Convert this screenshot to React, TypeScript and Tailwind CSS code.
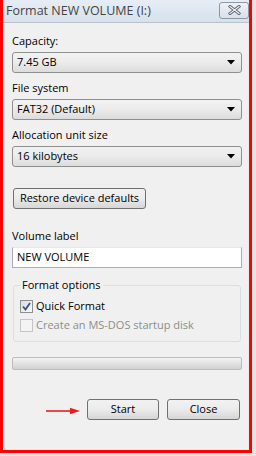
import React from 'react';

const font = { fontFamily: '"Open Sans", "Noto Sans", sans-serif' };

const Caret: React.FC = () => (
  <svg width="8" height="5" viewBox="0 0 8 5" className="shrink-0">
    <path d="M0 0h8L4 4.5z" fill="#000" />
  </svg>
);

const Select: React.FC<{ value: string }> = ({ value }) => (
  <div className="ml-[9px] mr-[7px] h-[21px] shrink-0 flex items-center justify-between pl-[4px] pr-[6px] rounded-[3px] border border-[#8e8f8f] bg-gradient-to-b from-[#f2f2f2] via-[#ebebeb] to-[#dcdcdc]">
    <span>{value}</span>
    <Caret />
  </div>
);

const Button: React.FC<{ label: string; className?: string }> = ({ label, className = '' }) => (
  <div
    className={`h-[21px] shrink-0 flex items-center justify-center rounded-[3px] border border-[#707070] bg-gradient-to-b from-[#f2f2f2] via-[#ebebeb] to-[#d6d6d6] text-black ${className}`}
  >
    {label}
  </div>
);

const Label: React.FC<{ text: string; top: string }> = ({ text, top }) => (
  <div className={`pl-[9px] pb-[3px] leading-[16px] ${top}`}>{text}</div>
);

const App: React.FC = () => {
  return (
    <div className="w-[256px] h-[456px] bg-[#e4e4e4] overflow-hidden" style={font}>
      <div className="w-[252px] h-[453px] flex flex-col border-l-[3px] border-r-[3px] border-b-[3px] border-[#ff0000] bg-[#f0f0f0]">
        {/* title bar */}
        <div className="h-[23px] shrink-0 flex items-center justify-between pl-[3px] bg-gradient-to-b from-[#e6edf5] to-[#d7e1ec] border-b border-[#b9c3ce]">
          <span className="text-[12.5px] text-[#444] pt-[1px]">Format NEW VOLUME (I:)</span>
          <div className="w-[30px] h-[17px] mb-[2px] rounded-[3px] border border-[#8d98a5] bg-gradient-to-b from-[#eef2f6] to-[#d9e0e8] flex items-center justify-center">
            <svg width="13" height="10" viewBox="0 0 13 10">
              <path d="M2 1.5L11 8.5M11 1.5L2 8.5" stroke="#5a6470" strokeWidth="3" strokeLinecap="square" />
              <path d="M2 1.5L11 8.5M11 1.5L2 8.5" stroke="#f4f6f8" strokeWidth="1.2" strokeLinecap="square" />
            </svg>
          </div>
        </div>

        <div className="flex-1 flex flex-col text-[11px] text-black">
          <Label text="Capacity:" top="pt-[10px]" />
          <Select value="7.45 GB" />

          <Label text="File system" top="pt-[7px]" />
          <Select value="FAT32 (Default)" />

          <Label text="Allocation unit size" top="pt-[7px]" />
          <Select value="16 kilobytes" />

          <div className="pl-[10px] pt-[21px]">
            <Button label="Restore device defaults" className="w-[133px]" />
          </div>

          <Label text="Volume label" top="pt-[19px]" />
          <div className="ml-[9px] mr-[7px] h-[21px] shrink-0 flex items-center px-[4px] border border-[#abadb3] border-t-[#e3e9ef] bg-white">
            NEW VOLUME
          </div>

          {/* format options group */}
          <div className="relative ml-[10px] mr-[8px] mt-[17px] h-[57px] shrink-0 rounded-[3px] border border-[#d5dfe5] pt-[12px] pl-[6px]">
            <span className="absolute -top-[9px] left-[6px] px-[2px] leading-[16px] bg-[#f0f0f0]">Format options</span>
            <div className="flex items-center gap-[3px] h-[16px]">
              <div className="w-[13px] h-[13px] border border-[#8f8f8f] bg-gradient-to-br from-[#dcdcdc] to-[#fafafa] flex items-center justify-center">
                <svg width="9" height="9" viewBox="0 0 9 9">
                  <path d="M1 4.5L3.5 7.5L8 1" fill="none" stroke="#3a4f8c" strokeWidth="1.8" />
                </svg>
              </div>
              <span>Quick Format</span>
            </div>
            <div className="flex items-center gap-[3px] h-[16px] mt-[3px] text-[#8d8d8d]">
              <div className="w-[13px] h-[13px] border border-[#c5c5c5] bg-[#f4f4f4]" />
              <span>Create an MS-DOS startup disk</span>
            </div>
          </div>

          {/* progress bar */}
          <div className="ml-[9px] mr-[7px] mt-[15px] h-[13px] shrink-0 rounded-[2px] border border-[#bcbcbc] bg-gradient-to-b from-[#f3f3f3] via-[#e2e2e2] to-[#d2d2d2]" />

          <div className="flex items-center justify-end gap-[8px] pr-[9px] pt-[29px]">
            <svg width="36" height="8" viewBox="0 0 36 8" className="mr-[-3px] mt-[3px]">
              <path d="M0 4h27" stroke="#e32020" strokeWidth="1.6" />
              <path d="M24 0.8L34 4L24 7.2z" fill="#e32020" />
            </svg>
            <Button label="Start" className="w-[72px]" />
            <Button label="Close" className="w-[73px]" />
          </div>
        </div>
      </div>
    </div>
  );
};

export default App;
